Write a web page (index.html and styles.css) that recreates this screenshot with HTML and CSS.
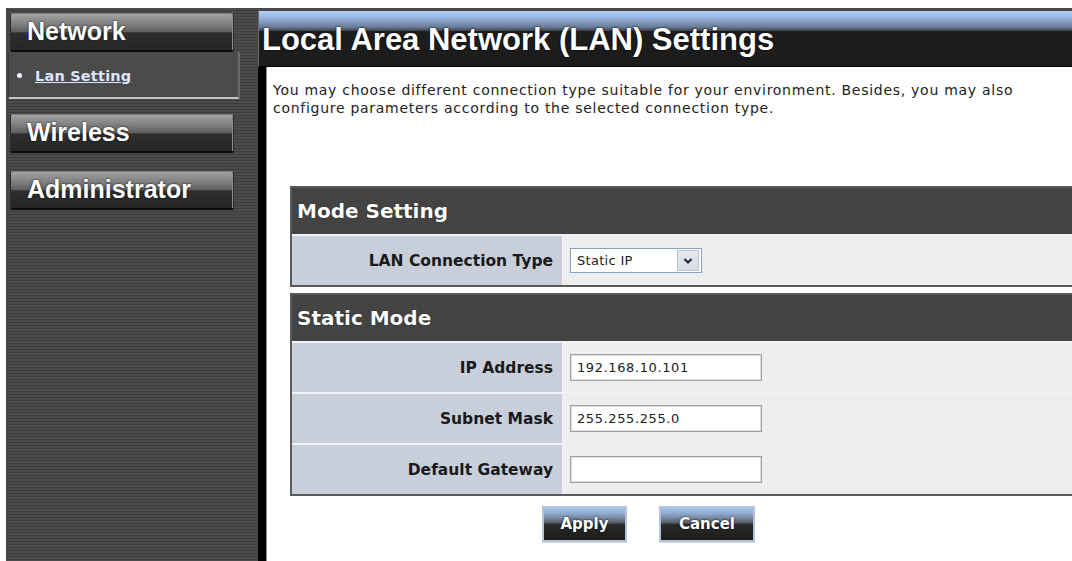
FILE: index.html
```html
<!DOCTYPE html>
<html lang="en">
<head>
<meta charset="utf-8">
<title>Local Area Network (LAN) Settings</title>
<link rel="stylesheet" href="styles.css">
</head>
<body>
<div class="page">
  <nav class="sidebar">
    <div class="nav-btn">Network</div>
    <div class="submenu">
      <span class="bullet"></span><a class="sub-link" href="#">Lan Setting</a>
    </div>
    <div class="nav-btn nav-gap">Wireless</div>
    <div class="nav-btn nav-gap2">Administrator</div>
  </nav>

  <main class="main">
    <header class="main-header">
      <h1 class="title">Local Area Network (LAN) Settings</h1>
    </header>

    <div class="content">
      <p class="intro">You may choose different connection type suitable for your environment. Besides, you may also configure parameters according to the selected connection type.</p>

      <section class="panel panel-first">
        <div class="panel-head">Mode Setting</div>
        <div class="row">
          <div class="label">LAN Connection Type</div>
          <div class="value">
            <div class="select">
              <span class="select-text">Static IP</span>
              <span class="select-btn">
                <svg width="12" height="10" viewBox="0 0 12 10"><path d="M2.5 3 L6 6.5 L9.5 3" fill="none" stroke="#1f2a44" stroke-width="2.2"/></svg>
              </span>
            </div>
          </div>
        </div>
      </section>

      <section class="panel">
        <div class="panel-head">Static Mode</div>
        <div class="row">
          <div class="label">IP Address</div>
          <div class="value"><div class="field">192.168.10.101</div></div>
        </div>
        <div class="row">
          <div class="label">Subnet Mask</div>
          <div class="value"><div class="field">255.255.255.0</div></div>
        </div>
        <div class="row">
          <div class="label">Default Gateway</div>
          <div class="value"><div class="field"></div></div>
        </div>
      </section>

      <div class="actions">
        <button class="btn btn-apply" type="button">Apply</button>
        <button class="btn btn-cancel" type="button">Cancel</button>
      </div>
    </div>
  </main>
</div>
</body>
</html>
```

FILE: styles.css
```css
html, body {
  margin: 0;
  padding: 0;
  background: #ffffff;
}

body {
  width: 1072px;
  height: 561px;
  overflow: hidden;
  padding: 8px 0 0 6px;
  box-sizing: border-box;
  font-family: "DejaVu Sans", Verdana, sans-serif;
}

.page {
  display: flex;
  height: 553px;
}

/* ---------- left navigation ---------- */
.sidebar {
  width: 252px;
  flex: none;
  padding: 5px 0 0 4px;
  box-sizing: border-box;
  background: repeating-linear-gradient(to bottom, #4b4b4b 0, #4b4b4b 2px, #3c3c3c 2px, #3c3c3c 3px);
}

.nav-btn {
  width: 206px;
  height: 35px;
  box-sizing: content-box;
  border: 1px solid #2a2a2a;
  border-top-color: #7a7a7a;
  border-bottom: 2px solid #0e0e0e;
  border-radius: 2px;
  background: linear-gradient(to bottom, #a2a2a2 0%, #7c7c7c 30%, #5c5c5c 50%, #2e2e2e 52%, #262626 100%);
  box-shadow: inset -1px 0 0 #8a8a8a;
  padding: 1px 0 0 16px;
  font-family: "Liberation Sans", Arial, sans-serif;
  font-weight: bold;
  font-size: 25px;
  line-height: 32px;
  color: #ffffff;
  text-shadow: 0 0 2px #000000;
  overflow: hidden;
  white-space: nowrap;
}

.nav-gap { margin-top: 15px; }
.nav-gap2 { margin-top: 18px; }

.submenu {
  width: 221px;
  height: 45px;
  margin-left: -2px;
  background: #4b4b4b;
  border-left: 1px solid #3a3a3a;
  border-right: 2px solid #6a6a6a;
  border-bottom: 2px solid #c4c4c4;
  border-radius: 0 0 2px 2px;
  display: flex;
  align-items: center;
  padding: 0 0 0 8px;
  box-sizing: content-box;
}

.bullet {
  width: 5px;
  height: 5px;
  border-radius: 50%;
  background: #eef2ff;
  margin: 2px 13px 0 0;
  flex: none;
}

.sub-link {
  font-family: "DejaVu Sans", Verdana, sans-serif;
  font-weight: bold;
  font-size: 14.5px;
  letter-spacing: 0.2px;
  color: #dde5ff;
  text-decoration: underline;
  margin-top: 3px;
}

/* ---------- main column ---------- */
.main {
  flex: 1;
  min-width: 0;
  display: flex;
  flex-direction: column;
}

.main-header {
  height: 59px;
  box-sizing: border-box;
  border-top: 3px solid #4a4a4a;
  border-bottom: 1px solid #000000;
  border-left: 1px solid #6a6a6a;
  background: linear-gradient(to bottom, #b4d0f6 0px, #9ab8e2 6px, #6a7d98 16px, #3a414c 20px, #1d1d1d 20px, #1c1c1c 100%);
  padding: 11px 0 0 3px;
}

.title {
  margin: 0;
  font-family: "Liberation Sans", Arial, sans-serif;
  font-weight: bold;
  font-size: 31px;
  line-height: 35px;
  color: #ffffff;
  text-shadow: 0 0 2px #000000, 0 0 1px #000000;
  white-space: nowrap;
}

.content {
  flex: 1;
  border-left: 8px solid #000000;
  box-shadow: inset 1px 0 0 #8c8c8c;
  background: #ffffff;
  padding: 14px 0 0 7px;
  overflow: hidden;
}

.intro {
  margin: 0;
  width: 760px;
  font-size: 14px;
  letter-spacing: 0.72px;
  line-height: 18px;
  color: #222222;
}

/* ---------- setting panels ---------- */
.panel {
  width: 800px;
  margin-left: 17px;
  border: 2px solid #5a5a5a;
  border-right: none;
  background: #f3f5f8;
}

.panel-first { margin-top: 69px; }
.panel + .panel { margin-top: 6px; }

.panel-head {
  height: 46px;
  background: #434343;
  display: flex;
  align-items: center;
  padding-left: 5px;
  font-weight: bold;
  font-size: 20px;
  color: #ffffff;
  text-shadow: 0 0 1px #000000;
}

.row {
  display: grid;
  grid-template-columns: 270px 1fr;
  height: 49px;
  border-top: 2px solid #eef1f5;
}

.label {
  background: #c8cfdb;
  display: flex;
  align-items: center;
  justify-content: flex-end;
  padding-right: 9px;
  font-weight: bold;
  font-size: 15.5px;
  color: #1a1a1a;
}

.value {
  background: #eeeeee;
  border-left: 1px solid #f4f4f4;
  display: flex;
  align-items: center;
  padding-left: 7px;
}

.select {
  width: 132px;
  height: 25px;
  box-sizing: border-box;
  border: 1px solid #8aa2c0;
  background: #ffffff;
  display: flex;
  align-items: center;
  justify-content: space-between;
  padding: 1px 2px 1px 6px;
}

.select-text {
  font-size: 13px;
  letter-spacing: 0.3px;
  color: #1c1c1c;
}

.select-btn {
  width: 22px;
  height: 21px;
  box-sizing: border-box;
  border: 1px solid #b9c3d3;
  background: linear-gradient(to bottom, #e8ebf1, #d6dbe4);
  display: flex;
  align-items: center;
  justify-content: center;
}

.field {
  width: 192px;
  height: 27px;
  box-sizing: border-box;
  border: 1px solid #a2a2a2;
  box-shadow: inset 0 0 0 1px #dcdcdc;
  background: #ffffff;
  padding: 0 6px;
  font-size: 13px;
  letter-spacing: 0.6px;
  line-height: 25px;
  color: #222222;
}

/* ---------- buttons ---------- */
.actions {
  display: flex;
  gap: 32px;
  padding: 10px 0 0 269px;
}

.btn {
  height: 36px;
  box-sizing: border-box;
  border: 2px solid #b7c2d6;
  box-shadow: 0 1px 0 #d4dae6;
  background: linear-gradient(to bottom, #a6c6f0 0%, #8aa4c8 20%, #5c626c 45%, #2a2a2a 52%, #1b1b1b 100%);
  font-family: "DejaVu Sans", Verdana, sans-serif;
  font-weight: bold;
  font-size: 15px;
  color: #ffffff;
  text-shadow: 0 0 2px #000000;
  padding: 0;
  cursor: pointer;
}

.btn-apply { width: 85px; }
.btn-cancel { width: 96px; }
```
